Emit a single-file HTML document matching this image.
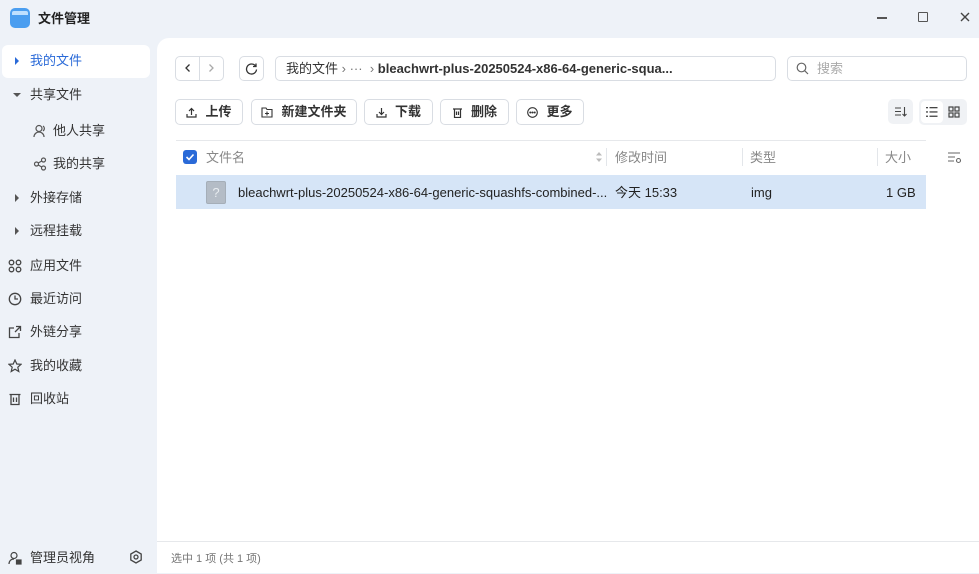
<!DOCTYPE html>
<html><head><meta charset="utf-8">
<style>
*{box-sizing:border-box;margin:0;padding:0}
body{width:979px;height:573px;overflow:hidden;background:#eef2f8;font-family:"Liberation Sans","Noto Sans CJK SC",sans-serif;color:#333;font-size:13px;line-height:16px;position:relative}
.a{position:absolute}
.main{left:157px;top:38px;width:822px;height:535px;background:#fff;border-top-left-radius:12px}
.nav{left:4px;width:146px;height:33px;display:flex;align-items:center;font-size:13px;color:#333}
.nav .ic{width:26px;display:flex;justify-content:center;color:#555}
.btn{top:99px;height:26px;border:1px solid #d9dde3;border-radius:5px;display:flex;align-items:center;justify-content:center;font-size:13px;font-weight:bold;color:#333;background:#fff}
.btn svg{margin-right:8px}
.hd{top:150px;font-size:13px;color:#888}
.sep{top:148px;width:1px;height:18px;background:#e3e6ea}
.r{top:185px;font-size:13px;color:#222;white-space:nowrap}
</style></head><body>
<div class="a" style="left:10px;top:8px;width:20px;height:20px;border-radius:5px;background:#4b9ef0;overflow:hidden"><div style="position:absolute;left:2px;top:3px;width:16px;height:4px;background:#bfe0ff;border-radius:2px 2px 0 0"></div></div>
<div class="a" style="left:38px;top:11px;font-size:13px;font-weight:bold;color:#222">文件管理</div>
<div class="a" style="left:877px;top:17px;width:10px;height:1.5px;background:#555"></div>
<div class="a" style="left:918px;top:12px;width:10px;height:10px;border:1.5px solid #555;border-radius:1px"></div>
<svg class="a" style="left:960px;top:12px" width="10" height="10"><path d="M1 1L9 9M9 1L1 9" stroke="#444" stroke-width="1.4"/></svg>

<div class="a" style="left:2px;top:45px;width:148px;height:33px;background:#fff;border-radius:6px"></div>
<div class="a nav" style="top:44px;color:#2a6ad8"><span class="ic"><svg width="6" height="8"><path d="M1 0L5 4L1 8Z" fill="#2a6ad8"/></svg></span>我的文件</div>
<div class="a nav" style="top:78px"><span class="ic"><svg width="8" height="6"><path d="M0 1L8 1L4 5Z" fill="#555"/></svg></span>共享文件</div>
<div class="a nav" style="top:114px;left:27px"><span class="ic"><svg width="14" height="14" fill="none" stroke="#555" stroke-width="1.2"><circle cx="6" cy="4.5" r="3"/><path d="M1 13c0-3 2.5-5 5-5s5 2 5 5M10 2a3 3 0 0 1 0 5"/></svg></span>他人共享</div>
<div class="a nav" style="top:147px;left:27px"><span class="ic"><svg width="14" height="14" fill="none" stroke="#555" stroke-width="1.2"><circle cx="3.5" cy="7" r="2"/><circle cx="10.5" cy="3" r="2"/><circle cx="10.5" cy="11" r="2"/><path d="M5.3 6L8.7 4M5.3 8L8.7 10"/></svg></span>我的共享</div>
<div class="a nav" style="top:181px"><span class="ic"><svg width="6" height="8"><path d="M1 0L5 4L1 8Z" fill="#555"/></svg></span>外接存储</div>
<div class="a nav" style="top:214px"><span class="ic"><svg width="6" height="8"><path d="M1 0L5 4L1 8Z" fill="#555"/></svg></span>远程挂载</div>
<div class="a nav" style="top:249px;left:0"><span class="ic" style="width:30px"><svg width="14" height="14" fill="none" stroke="#444" stroke-width="1.3"><circle cx="3.5" cy="3.5" r="2.3"/><circle cx="10.5" cy="3.5" r="2.3"/><circle cx="3.5" cy="10.5" r="2.3"/><circle cx="10.5" cy="10.5" r="2.3"/></svg></span>应用文件</div>
<div class="a nav" style="top:282px;left:0"><span class="ic" style="width:30px"><svg width="14" height="14" fill="none" stroke="#444" stroke-width="1.3"><circle cx="7" cy="7" r="5.7"/><path d="M7 3.5V7H10"/></svg></span>最近访问</div>
<div class="a nav" style="top:315px;left:0"><span class="ic" style="width:30px"><svg width="14" height="14" fill="none" stroke="#444" stroke-width="1.3"><path d="M6 3H1.5V12.5H11V8M8 1.5H12.5V6M12.5 1.5L7 7"/></svg></span>外链分享</div>
<div class="a nav" style="top:349px;left:0"><span class="ic" style="width:30px"><svg width="14" height="14" fill="none" stroke="#444" stroke-width="1.2"><path d="M7 1L8.8 5L13 5.3L9.8 8.2L10.8 12.5L7 10.2L3.2 12.5L4.2 8.2L1 5.3L5.2 5Z"/></svg></span>我的收藏</div>
<div class="a nav" style="top:382px;left:0"><span class="ic" style="width:30px"><svg width="14" height="14" fill="none" stroke="#444" stroke-width="1.3"><path d="M1.5 2.5H12.5M3 2.5V12.5H11V2.5M5.5 5.5V10M8.5 5.5V10"/></svg></span>回收站</div>
<div class="a nav" style="top:541px;left:0"><span class="ic" style="width:30px"><svg width="14" height="14" fill="none" stroke="#444" stroke-width="1.2"><circle cx="6" cy="4.5" r="3"/><path d="M1 13c0-3 2-5 5-5"/><rect x="8.5" y="9" width="4.5" height="4" fill="#444"/></svg></span>管理员视角</div>
<svg class="a" style="left:129px;top:550px" width="14" height="14" fill="none" stroke="#444" stroke-width="1.3"><path d="M7 1L12.2 4V10L7 13L1.8 10V4Z"/><circle cx="7" cy="7" r="2"/></svg>

<div class="a main"></div>
<div class="a" style="left:175px;top:56px;width:49px;height:25px;border:1px solid #d9dde3;border-radius:5px"></div>
<div class="a" style="left:199px;top:57px;width:1px;height:23px;background:#d9dde3"></div>
<svg class="a" style="left:183px;top:63px" width="10" height="10"><path d="M6.5 1.5L3 5L6.5 8.5" stroke="#333" stroke-width="1.3" fill="none"/></svg>
<svg class="a" style="left:206px;top:63px" width="10" height="10"><path d="M3.5 1.5L7 5L3.5 8.5" stroke="#aaa" stroke-width="1.3" fill="none"/></svg>
<div class="a" style="left:239px;top:56px;width:25px;height:25px;border:1px solid #d9dde3;border-radius:5px"></div>
<svg class="a" style="left:245px;top:62px" width="13" height="13" fill="none" stroke="#333" stroke-width="1.3"><path d="M10.5 4A5 5 0 1 0 11.5 7.5M11 1.5V4.5H8"/></svg>
<div class="a" style="left:275px;top:56px;width:501px;height:25px;border:1px solid #d9dde3;border-radius:5px"></div>
<div class="a" style="left:286px;top:61px;font-size:13px;color:#333;white-space:nowrap">我的文件 <span style="color:#777">›</span> <span style="color:#777">···</span> &nbsp;<span style="color:#777">›</span> <b>bleachwrt-plus-20250524-x86-64-generic-squa...</b></div>
<div class="a" style="left:787px;top:56px;width:180px;height:25px;border:1px solid #d9dde3;border-radius:5px"></div>
<svg class="a" style="left:796px;top:62px" width="13" height="13" fill="none" stroke="#666" stroke-width="1.2"><circle cx="5.5" cy="5.5" r="4.3"/><path d="M8.7 8.7L12 12"/></svg>
<div class="a" style="left:817px;top:61px;font-size:13px;color:#aaa">搜索</div>

<div class="a btn" style="left:175px;width:68px"><svg width="11" height="11" fill="none" stroke="#333" stroke-width="1.2"><path d="M1 7V10H10V7M5.5 8V1.5M3 4L5.5 1.5L8 4"/></svg>上传</div>
<div class="a btn" style="left:251px;width:106px"><svg width="12" height="11" fill="none" stroke="#333" stroke-width="1.1"><path d="M1 1H5L6 2.5H11V10H1Z M6 4.5V8.5M4 6.5H8"/></svg>新建文件夹</div>
<div class="a btn" style="left:364px;width:69px"><svg width="11" height="11" fill="none" stroke="#333" stroke-width="1.2"><path d="M1 7V10H10V7M5.5 1V7.5M3 5L5.5 7.5L8 5"/></svg>下载</div>
<div class="a btn" style="left:440px;width:69px"><svg width="11" height="11" fill="none" stroke="#333" stroke-width="1.2"><path d="M1 2H10M2.5 2V10.5H8.5V2M4.5 4.5V8M6.5 4.5V8"/></svg>删除</div>
<div class="a btn" style="left:516px;width:68px"><svg width="11" height="11" fill="none" stroke="#333" stroke-width="1.1"><circle cx="5.5" cy="5.5" r="4.8"/><circle cx="3.3" cy="5.5" r=".5" fill="#333"/><circle cx="5.5" cy="5.5" r=".5" fill="#333"/><circle cx="7.7" cy="5.5" r=".5" fill="#333"/></svg>更多</div>
<div class="a" style="left:888px;top:99px;width:25px;height:25px;background:#f0f2f5;border-radius:5px"></div>
<svg class="a" style="left:894px;top:105px" width="13" height="13" fill="none" stroke="#444" stroke-width="1.1"><path d="M1 3H7M1 6.5H7M1 10H7M10.5 2V11M8.5 9L10.5 11L12.5 9"/></svg>
<div class="a" style="left:919px;top:99px;width:48px;height:26px;background:#f0f2f5;border-radius:5px"></div>
<div class="a" style="left:921px;top:101px;width:22px;height:22px;background:#fff;border-radius:4px"></div>
<svg class="a" style="left:926px;top:106px" width="12" height="12" fill="#444"><rect x="0" y="1" width="2" height="1.3"/><rect x="3.5" y="1" width="8" height="1.3"/><rect x="0" y="5.3" width="2" height="1.3"/><rect x="3.5" y="5.3" width="8" height="1.3"/><rect x="0" y="9.6" width="2" height="1.3"/><rect x="3.5" y="9.6" width="8" height="1.3"/></svg>
<svg class="a" style="left:948px;top:106px" width="12" height="12" fill="none" stroke="#444" stroke-width="1.2"><rect x="1" y="1" width="4" height="4"/><rect x="7" y="1" width="4" height="4"/><rect x="1" y="7" width="4" height="4"/><rect x="7" y="7" width="4" height="4"/></svg>

<div class="a" style="left:176px;top:140px;width:750px;height:1px;background:#e6e8eb"></div>
<div class="a" style="left:183px;top:150px;width:14px;height:14px;background:#2a6ad8;border-radius:3px"></div>
<svg class="a" style="left:183px;top:150px" width="14" height="14"><path d="M3.5 7L6 9.5L10.5 4.5" stroke="#fff" stroke-width="1.6" fill="none"/></svg>
<div class="a hd" style="left:206px">文件名</div>
<svg class="a" style="left:595px;top:150px" width="8" height="14"><path d="M1 5.5L4 2L7 5.5Z M1 8.5L4 12L7 8.5Z" fill="#bbb"/></svg>
<div class="a sep" style="left:606px"></div>
<div class="a hd" style="left:615px">修改时间</div>
<div class="a sep" style="left:742px"></div>
<div class="a hd" style="left:750px">类型</div>
<div class="a sep" style="left:877px"></div>
<div class="a hd" style="left:885px">大小</div>
<svg class="a" style="left:947px;top:151px" width="16" height="13" fill="none" stroke="#666" stroke-width="1.1"><path d="M1 2H13M1 6H8M1 10H7"/><circle cx="11.5" cy="9.5" r="2"/></svg>

<div class="a" style="left:176px;top:175px;width:750px;height:34px;background:#d6e5f7"></div>
<div class="a" style="left:206px;top:181px;width:20px;height:23px;background:#b4bcc6;border-radius:2px;border:1px solid #a5aeb8;color:#e8ecf0;font-size:13px;text-align:center;line-height:22px">?</div>
<div class="a r" style="left:238px">bleachwrt-plus-20250524-x86-64-generic-squashfs-combined-...</div>
<div class="a r" style="left:615px">今天 15:33</div>
<div class="a r" style="left:751px">img</div>
<div class="a r" style="left:886px">1 GB</div>

<div class="a" style="left:157px;top:541px;width:822px;height:1px;background:#e6e8eb"></div>
<div class="a" style="left:171px;top:552px;font-size:11px;color:#777;line-height:14px">选中 1 项 (共 1 项)</div>
</body></html>
